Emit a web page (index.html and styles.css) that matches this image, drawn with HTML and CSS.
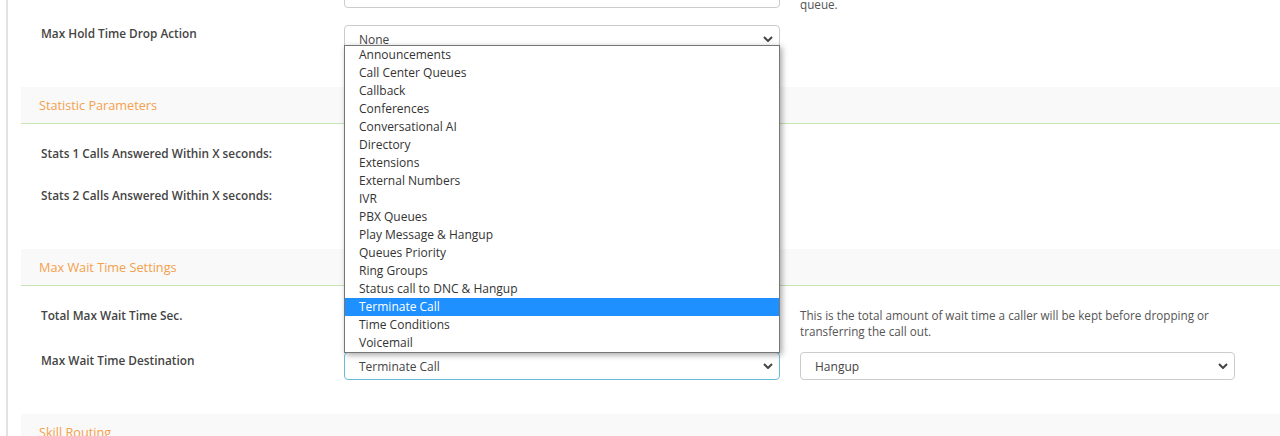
FILE: index.html
```html
<!DOCTYPE html>
<html lang="en">
<head>
    <meta charset="UTF-8">
    <title>Queue Settings</title>
    <link rel="stylesheet" href="styles.css">
</head>
<body>
    <div class="page">
        <div class="section-body">
            <div class="form-row">
                <label>Max Hold Time Sec.</label>
                <div class="input"></div>
                <p class="help">Maximum time a caller can stay on hold before being dropped from the<br>queue.</p>
            </div>
            <div class="form-row">
                <label>Max Hold Time Drop Action</label>
                <div class="select"><span>None</span><svg class="chev" viewBox="0 0 10 6"><path d="M1 1l4 4 4-4"/></svg></div>
                <p class="help"></p>
            </div>
        </div>

        <div class="section-head">Statistic Parameters</div>
        <div class="section-body">
            <div class="form-row">
                <label>Stats 1 Calls Answered Within X seconds:</label>
                <div class="input"></div>
                <p class="help"></p>
            </div>
            <div class="form-row">
                <label>Stats 2 Calls Answered Within X seconds:</label>
                <div class="input"></div>
                <p class="help"></p>
            </div>
        </div>

        <div class="section-head">Max Wait Time Settings</div>
        <div class="section-body">
            <div class="form-row">
                <label>Total Max Wait Time Sec.</label>
                <div class="input"></div>
                <p class="help">This is the total amount of wait time a caller will be kept before dropping or transferring the call out.</p>
            </div>
            <div class="form-row">
                <label>Max Wait Time Destination</label>
                <div class="select focused">
                    <span>Terminate Call</span><svg class="chev" viewBox="0 0 10 6"><path d="M1 1l4 4 4-4"/></svg>
                    <ul class="dropdown">
                        <li>Announcements</li>
                        <li>Call Center Queues</li>
                        <li>Callback</li>
                        <li>Conferences</li>
                        <li>Conversational AI</li>
                        <li>Directory</li>
                        <li>Extensions</li>
                        <li>External Numbers</li>
                        <li>IVR</li>
                        <li>PBX Queues</li>
                        <li>Play Message &amp; Hangup</li>
                        <li>Queues Priority</li>
                        <li>Ring Groups</li>
                        <li>Status call to DNC &amp; Hangup</li>
                        <li class="active">Terminate Call</li>
                        <li>Time Conditions</li>
                        <li>Voicemail</li>
                    </ul>
                </div>
                <div class="select"><span>Hangup</span><svg class="chev" viewBox="0 0 10 6"><path d="M1 1l4 4 4-4"/></svg></div>
            </div>
        </div>

        <div class="section-head">Skill Routing</div>
    </div>
</body>
</html>
```

FILE: styles.css
```css
body {
    margin: 0;
    display: flow-root;
    font-family: "Open Sans", Arial, sans-serif;
    color: #333;
    background: #fff;
    overflow: hidden;
}
.page {
    margin: -41px 0 0 6px;
    border-left: 2px solid #e2e2e2;
    padding-left: 13px;
}
.section-head {
    height: 36px;
    line-height: 36px;
    padding-left: 18px;
    background: #f9f9f9;
    border-bottom: 1px solid #c6e4b4;
    color: #f4a04c;
    font-size: 12.7px;
}
.section-body {
    display: flex;
    flex-direction: column;
    gap: 14px;
    padding: 21px 0 34px 20px;
}
.form-row {
    display: grid;
    grid-template-columns: 283px 436px 435px;
    column-gap: 20px;
    align-items: start;
}
.form-row label {
    font-size: 11.8px;
    font-weight: 600;
    line-height: 16px;
    color: #444;
}
.form-row .input,
.select {
    box-sizing: border-box;
    height: 28px;
    border: 1px solid #ccc;
    border-radius: 4px;
    background: #fff;
}
.select {
    position: relative;
    display: flex;
    align-items: center;
    justify-content: space-between;
    padding: 0 6px 0 14px;
    font-size: 12px;
    color: #444;
}
.select.focused {
    border-color: #6bbcd8;
}
.chev {
    width: 10px;
    height: 6px;
    fill: none;
    stroke: #444;
    stroke-width: 2;
}
.help {
    margin: 0 0 -1px;
    font-size: 11.7px;
    line-height: 16px;
    color: #555;
}
.dropdown {
    position: absolute;
    left: -1px;
    right: -1px;
    bottom: 100%;
    margin: 0;
    padding: 0;
    list-style: none;
    background: #fff;
    border: 1px solid #767676;
    box-shadow: 2px 2px 6px rgba(0, 0, 0, 0.35);
    z-index: 5;
}
.dropdown li {
    height: 18px;
    line-height: 18px;
    padding-left: 14px;
    font-size: 12px;
    color: #333;
}
.dropdown li.active {
    background: #1e90ff;
    color: #fff;
}
```
